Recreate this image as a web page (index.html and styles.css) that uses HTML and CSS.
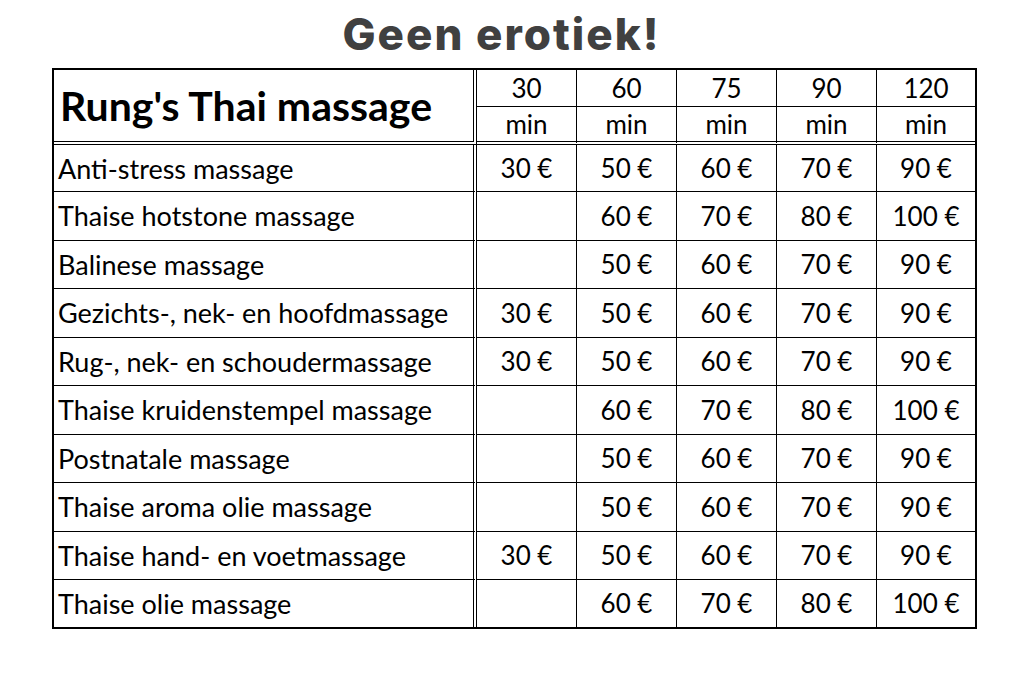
FILE: index.html
```html
<!DOCTYPE html>
<html lang="nl">
<head>
<meta charset="utf-8">
<title>Rung's Thai massage</title>
<link rel="stylesheet" href="styles.css">
</head>
<body>
<div class="page">
  <h1 class="title">Geen erotiek!</h1>
  <table class="prices">
    <thead>
      <tr class="h1row">
        <th class="name-head" rowspan="2">Rung's Thai massage</th>
        <th>30</th><th>60</th><th>75</th><th>90</th><th class="last">120</th>
      </tr>
      <tr class="h2row">
        <th>min</th><th>min</th><th>min</th><th>min</th><th class="last">min</th>
      </tr>
    </thead>
    <tbody>
      <tr class="firstrow"><td class="name">Anti-stress massage</td><td>30 €</td><td>50 €</td><td>60 €</td><td>70 €</td><td class="last">90 €</td></tr>
      <tr><td class="name">Thaise hotstone massage</td><td></td><td>60 €</td><td>70 €</td><td>80 €</td><td class="last">100 €</td></tr>
      <tr><td class="name">Balinese massage</td><td></td><td>50 €</td><td>60 €</td><td>70 €</td><td class="last">90 €</td></tr>
      <tr><td class="name">Gezichts-, nek- en hoofdmassage</td><td>30 €</td><td>50 €</td><td>60 €</td><td>70 €</td><td class="last">90 €</td></tr>
      <tr><td class="name">Rug-, nek- en schoudermassage</td><td>30 €</td><td>50 €</td><td>60 €</td><td>70 €</td><td class="last">90 €</td></tr>
      <tr><td class="name">Thaise kruidenstempel massage</td><td></td><td>60 €</td><td>70 €</td><td>80 €</td><td class="last">100 €</td></tr>
      <tr><td class="name">Postnatale massage</td><td></td><td>50 €</td><td>60 €</td><td>70 €</td><td class="last">90 €</td></tr>
      <tr><td class="name">Thaise aroma olie massage</td><td></td><td>50 €</td><td>60 €</td><td>70 €</td><td class="last">90 €</td></tr>
      <tr><td class="name">Thaise hand- en voetmassage</td><td>30 €</td><td>50 €</td><td>60 €</td><td>70 €</td><td class="last">90 €</td></tr>
      <tr class="lastrow"><td class="name">Thaise olie massage</td><td></td><td>60 €</td><td>70 €</td><td>80 €</td><td class="last">100 €</td></tr>
    </tbody>
  </table>
</div>
</body>
</html>
```

FILE: styles.css
```css
html, body {
  margin: 0;
  padding: 0;
  background: #ffffff;
}

.page {
  width: 1029px;
  padding-left: 52px;
  box-sizing: border-box;
}

.title {
  margin: 0 0 8px 0;
  padding: 8px 78px 0 0;
  height: 52px;
  box-sizing: content-box;
  line-height: 52px;
  text-align: center;
  font-family: Inter, "Open Sans", sans-serif;
  font-weight: 800;
  font-size: 44px;
  letter-spacing: 2px;
  color: #404040;
}

.prices {
  border-collapse: separate;
  border-spacing: 0;
  table-layout: fixed;
  width: 924px;
  border: 2px solid #000;
  font-family: Lato, "Open Sans", sans-serif;
  font-size: 26px;
  color: #000;
}

.prices th,
.prices td {
  box-sizing: border-box;
  padding: 0;
  border-right: 1px solid #000;
  border-bottom: 1px solid #000;
  text-align: center;
  vertical-align: middle;
  font-weight: 400;
  width: 100px;
}

.prices .last {
  border-right: none;
  width: 98px;
}

.prices .name-head,
.prices .name {
  width: 423px;
  border-right: 4px double #000;
  text-align: left;
}

.prices .name-head {
  padding-left: 6px;
  font-weight: 700;
  font-size: 41px;
  border-bottom: 4px double #000;
}

.prices .name {
  padding-left: 4px;
  font-size: 27px;
}

.h1row th {
  height: 37px;
}

.h2row th {
  height: 38px;
  border-bottom: 4px double #000;
}

.prices tbody td {
  height: 48.5px;
}

.prices .firstrow td {
  height: 47px;
}

.prices .lastrow td {
  border-bottom: none;
  height: 46.5px;
}
```
